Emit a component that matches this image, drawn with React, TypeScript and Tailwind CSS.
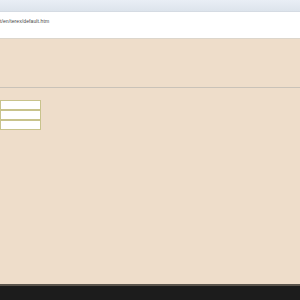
export default function App() {
  return (
    <div className="w-[300px] h-[300px] flex flex-col bg-[#eeddca] overflow-hidden" style={{ fontFamily: '"Liberation Sans", Arial, sans-serif' }}>
      <div className="h-[12px] bg-gradient-to-b from-[#e9eef5] to-[#dde4ec] border-b border-[#d5dbe3]" />
      <div className="h-[27px] bg-white border-b border-[#dcd6cc] pl-0 pt-[6px]">
        <span className="block text-[5px] leading-[6px] text-[#444] tracking-[0.02em]">t/en/terex/default.htm</span>
      </div>
      <div className="h-[49px] border-b border-[#c9c2b8]" />
      <div className="pt-[12px] flex flex-col w-[41px]">
        <div className="h-[10px] bg-white border border-[#c8c38c]" />
        <div className="h-[10px] bg-white border border-[#c8c38c]" />
        <div className="h-[10px] bg-white border border-[#c8c38c]" />
      </div>
      <div className="flex-1" />
      <div className="h-[16px] bg-[#1c1c1c] border-t-2 border-[#5a544c]" />
    </div>
  );
}
